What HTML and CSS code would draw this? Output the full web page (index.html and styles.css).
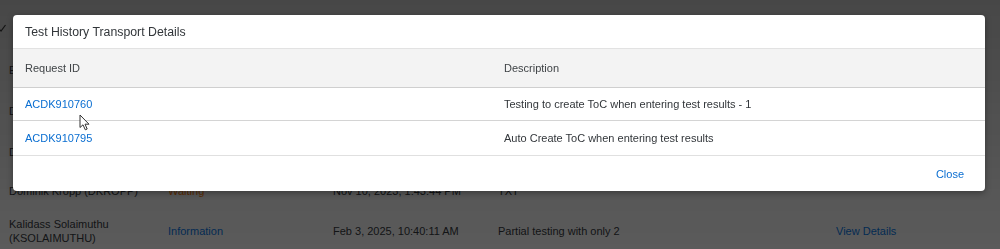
FILE: index.html
```html
<!DOCTYPE html>
<html>
<head>
   <title>Test History</title>
   <link rel="stylesheet" href="styles.css">
</head>
<body>
   <!-- background page: test history list -->
   <div class="page">
       <div class="toolbar">
           <svg class="check" width="8" height="8" viewBox="0 0 8 8"><path d="M0.5 4.5 L3 7 L7.5 1" fill="none" stroke="#3a3a3a" stroke-width="1.2"/></svg>
       </div>
       <div class="history">
           <!-- rows hidden behind the dialog: only the first letter peeks out -->
           <div class="row">
               <span>E</span>
           </div>
           <div class="row">
               <span>D</span>
           </div>
           <div class="row">
               <span>D</span>
           </div>
           <div class="row short">
               <span>Dominik Kropp (DKROPP)</span>
               <span class="status warn">Waiting</span>
               <span>Nov 10, 2023, 1:43:44 PM</span>
               <span>TXT</span>
               <span></span>
           </div>
           <div class="row">
               <span>Kalidass Solaimuthu<br>(KSOLAIMUTHU)</span>
               <span class="status info">Information</span>
               <span>Feb 3, 2025, 10:40:11 AM</span>
               <span>Partial testing with only 2</span>
               <span class="link">View Details</span>
           </div>
       </div>
   </div>

   <!-- modal overlay -->
   <div class="overlay"></div>

   <!-- transport details dialog -->
   <div class="dialog">
       <div class="dialog-title">Test History Transport Details</div>
       <div class="grid head">
           <span>Request ID</span>
           <span>Description</span>
       </div>
       <div class="grid item first">
           <a class="link">ACDK910760</a>
           <span>Testing to create ToC when entering test results - 1</span>
       </div>
       <div class="grid item second">
           <a class="link">ACDK910795</a>
           <span>Auto Create ToC when entering test results</span>
       </div>
       <div class="dialog-footer">
           <a class="link">Close</a>
       </div>
   </div>

   <!-- mouse pointer -->
   <svg class="pointer" width="12" height="17" viewBox="0 0 12 17">
       <path d="M1 1 L1 13.5 L4 10.8 L6.3 15.8 L8.2 15 L6 10.2 L10 10.2 Z" fill="#fff" stroke="#333" stroke-width="1" stroke-linejoin="round"/>
   </svg>
</body>
</html>
```

FILE: styles.css
```css
/* page base */
body {
    margin: 0;
    font-family: "Liberation Sans", Arial, sans-serif;
    font-size: 11px;
    color: #32363a;
    background-color: #e4e4e4;
    overflow: hidden;
}

.page {
    height: 249px;
}

.toolbar {
    height: 49px;
    display: flex;
    align-items: center;
}

.check {
    margin-left: -2px;
    margin-top: 6px;
}

/* background list rows */
.row {
    display: grid;
    grid-template-columns: 159px 165px 165px 338px 1fr;
    align-items: center;
    height: 41px;
    padding-left: 9px;
    line-height: 14px;
}

.row.short {
    height: 38px;
}

.status.info { color: #0a6ed1; }
.status.warn { color: #e9730c; }

.link {
    color: #0a6ed1;
    text-decoration: none;
    cursor: pointer;
}

/* dark overlay */
.overlay {
    position: fixed;
    top: 0;
    left: 0;
    width: 100%;
    height: 100%;
    background: linear-gradient(rgba(0,0,0,0.69), rgba(0,0,0,0.6));
}

/* dialog */
.dialog {
    position: absolute;
    top: 15px;
    left: 13px;
    width: 972px;
    background-color: #fff;
    border-radius: 4px;
    box-shadow: 0 2px 6px rgba(0,0,0,0.35);
    overflow: hidden;
}

.dialog-title {
    height: 33px;
    line-height: 34px;
    padding-left: 12px;
    font-size: 12.3px;
    color: #32363a;
    border-bottom: 1px solid #e2e2e2;
}

.grid {
    display: grid;
    grid-template-columns: 479px 1fr;
    align-items: center;
    padding: 0 12px;
    border-bottom: 1px solid #d4d4d4;
}

.grid.head {
    height: 38px;
    background-color: #f3f3f3;
    color: #3f4346;
    border-bottom-color: #cfcfcf;
}

.grid.item.first {
    height: 32px;
}

.grid.item.second {
    height: 34px;
    border-bottom-color: #e0e0e0;
}

.dialog-footer {
    height: 35px;
    display: flex;
    align-items: center;
    justify-content: flex-end;
    padding-right: 21px;
}

.pointer {
    position: absolute;
    top: 114px;
    left: 79px;
}
```
